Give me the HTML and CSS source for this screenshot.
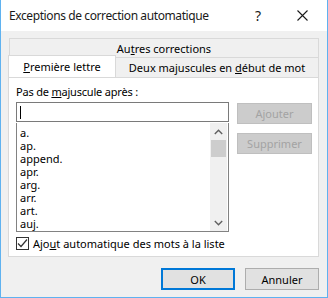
FILE: index.html
```html
<!DOCTYPE html>
<html>
    <head>
        <title>Exceptions de correction automatique</title>
        <link rel="stylesheet" href="styles.css">
    </head>
    <body>
        <div class="dialog">
            <div class="titlebar">
                <span class="title">Exceptions de correction automatique</span>
                <span class="help">?</span>
                <span class="close">
                    <svg width="11" height="11" viewBox="0 0 11 11"><path d="M0.5 0.5 L10.5 10.5 M10.5 0.5 L0.5 10.5" stroke="#1a1a1a" stroke-width="1.1" fill="none"/></svg>
                </span>
            </div>
            <div class="content">
                <div class="tabs">
                    <div class="tab back"><span>Au<u>t</u>res corrections</span></div>
                    <div class="tabrow">
                        <div class="tab active"><span><u>P</u>remière lettre</span></div>
                        <div class="tab other"><span>Deux majuscules en <u>d</u>ébut de mot</span></div>
                    </div>
                </div>
                <div class="panel">
                    <div class="label">Pas de <u>m</u>ajuscule après :</div>
                    <div class="panelrow">
                        <div class="listcol">
                            <div class="input"><span class="caret"></span></div>
                            <div class="list">
                                <div class="items">
                                    <div>a.</div>
                                    <div>ap.</div>
                                    <div>append.</div>
                                    <div>apr.</div>
                                    <div>arg.</div>
                                    <div>arr.</div>
                                    <div>art.</div>
                                    <div>auj.</div>
                                </div>
                                <div class="scroll">
                                    <div class="arrow">
                                        <svg width="9" height="6" viewBox="0 0 9 6"><path d="M0.8 5 L4.5 1.3 L8.2 5" stroke="#606060" stroke-width="1.4" fill="none"/></svg>
                                    </div>
                                    <div class="thumb"></div>
                                    <div class="track"></div>
                                    <div class="arrow">
                                        <svg width="9" height="6" viewBox="0 0 9 6"><path d="M0.8 1 L4.5 4.7 L8.2 1" stroke="#606060" stroke-width="1.4" fill="none"/></svg>
                                    </div>
                                </div>
                            </div>
                        </div>
                        <div class="btncol">
                            <div class="btn disabled">Ajouter</div>
                            <div class="btn disabled">Supprimer</div>
                        </div>
                    </div>
                    <div class="check">
                        <span class="box">
                            <svg width="11" height="11" viewBox="0 0 11 11"><path d="M1 5.5 L4 8.5 L10 1.5" stroke="#333" stroke-width="1.2" fill="none"/></svg>
                        </span>
                        <span>Ajo<u>u</u>t automatique des mots à la liste</span>
                    </div>
                </div>
                <div class="footer">
                    <div class="btn default">OK</div>
                    <div class="btn">Annuler</div>
                </div>
            </div>
        </div>
    </body>
</html>
```

FILE: styles.css
```css
body {
    margin: 0;
    font-family: "Noto Sans", sans-serif;
    font-size: 11px;
    color: #000;
}
.dialog {
    width: 328px;
    height: 298px;
    box-sizing: border-box;
    border: 1px solid #5fb2f0;
    border-top: none;
    background: #f0f0f0;
    display: flex;
    flex-direction: column;
}
.titlebar {
    height: 31px;
    background: #fff;
    display: flex;
    align-items: center;
    font-size: 12px;
    color: #1a1a1a;
}
.title {
    margin-left: 8px;
    flex: 1;
    letter-spacing: -0.4px;
}
.help {
    width: 16px;
    text-align: center;
    font-size: 14px;
    margin-right: 31px;
}
.close {
    display: flex;
    margin-right: 19px;
}
.content {
    padding: 7px 8px 0 7px;
    display: flex;
    flex-direction: column;
}
.tabs {
    display: flex;
    flex-direction: column;
}
.tab {
    box-sizing: border-box;
    border: 1px solid #d9d9d9;
    display: flex;
    align-items: center;
    justify-content: center;
}
.back {
    margin-left: 1px;
    height: 20px;
}
.tabrow {
    display: flex;
    height: 20px;
    margin-top: -1px;
}
.active {
    width: 108px;
    height: 22px;
    margin-top: -2px;
    background: #fff;
    border-bottom: none;
    position: relative;
    z-index: 1;
}
.other {
    flex: 1;
    height: 20px;
    border-left: none;
    border-bottom: none;
}
.panel {
    height: 180px;
    box-sizing: border-box;
    background: #fff;
    border: 1px solid #d9d9d9;
    padding: 6px 6px 0 7px;
}
.label {
    height: 15px;
    line-height: 15px;
    margin-bottom: 3px;
    letter-spacing: -0.2px;
}
.panelrow {
    display: flex;
    gap: 8px;
}
.listcol {
    width: 213px;
    display: flex;
    flex-direction: column;
}
.input {
    height: 20px;
    box-sizing: border-box;
    border: 1px solid #7a7a7a;
    display: flex;
    align-items: center;
    padding-left: 3px;
}
.caret {
    width: 1px;
    height: 13px;
    background: #000;
}
.list {
    height: 109px;
    box-sizing: border-box;
    border: 1px solid #828282;
    border-top: none;
    margin-top: 1px;
    display: flex;
}
.items {
    flex: 1;
    padding: 3px 0 0 3px;
}
.items div {
    height: 13px;
    line-height: 13px;
}
.scroll {
    width: 17px;
    margin-right: 1px;
    background: #f0f0f0;
    display: flex;
    flex-direction: column;
}
.arrow {
    height: 17px;
    display: flex;
    align-items: center;
    justify-content: center;
}
.thumb {
    height: 17px;
    margin: 0 1px;
    background: #cdcdcd;
}
.track {
    flex: 1;
}
.btncol {
    display: flex;
    flex-direction: column;
    gap: 9px;
    padding-top: 1px;
}
.btn {
    width: 74px;
    height: 22px;
    box-sizing: border-box;
    border: 1px solid #adadad;
    background: #e1e1e1;
    display: flex;
    align-items: center;
    justify-content: center;
}
.disabled {
    width: 75px;
    height: 21px;
    background: #cccccc;
    border-color: #bfbfbf;
    color: #a3a3a3;
}
.check {
    display: flex;
    align-items: center;
    gap: 4px;
    margin-top: 4px;
}
.box {
    width: 13px;
    height: 13px;
    box-sizing: border-box;
    border: 1px solid #333;
    display: flex;
    align-items: center;
    justify-content: center;
}
.footer {
    display: flex;
    justify-content: flex-end;
    gap: 10px;
    margin-top: 11px;
}
.default {
    border: 2px solid #0078d7;
}
```
